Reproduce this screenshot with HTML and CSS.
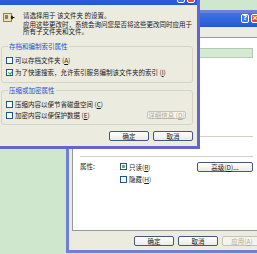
FILE: index.html
```html
<!DOCTYPE html>
<html lang="zh-CN">
  <head>
    <meta charset="UTF-8" />
    <link rel="stylesheet" href="styles.css">
    <title>高级属性</title>
  </head>
  <body>
    <!-- folder properties window, behind -->
    <div class="win back">
      <div class="title">
        <span class="tb help">?</span>
        <span class="tb close">×</span>
      </div>
      <div class="body">
        <div class="tabs"></div>
        <div class="panel">
          <div class="name-row">
            <div class="namebox"></div>
          </div>
          <div class="sep sep1"></div>
          <div class="sep sep2"></div>
          <div class="attr">
            <span class="attr-label">属性:</span>
            <div class="attr-checks">
              <div class="cb"><span class="box mixed"></span>只读(<u>R</u>)</div>
              <div class="cb"><span class="box"></span>隐藏(<u>H</u>)</div>
            </div>
            <button class="btn adv">高级(<u>D</u>)...</button>
          </div>
        </div>
        <div class="actions">
          <button class="btn">确定</button>
          <button class="btn">取消</button>
          <button class="btn" disabled>应用(<u>A</u>)</button>
        </div>
      </div>
    </div>

    <!-- advanced attributes dialog, in front (title bar is mostly off the top) -->
    <div class="win front">
      <div class="title">
        <span class="tb help"></span>
        <span class="tb close"></span>
      </div>
      <div class="body">
        <div class="head">
          <svg class="head-icon" width="12" height="11" viewBox="0 0 12 11">
            <rect x="0.5" y="1.5" width="8" height="8" fill="#f1e3a8" stroke="#8c8060" stroke-width="1" />
            <rect x="2" y="3" width="3" height="4" fill="#6d7fa8" />
            <path d="M8 5.5 L11.5 5.5 M8 5.5 L9.6 4 M8 5.5 L9.6 7" stroke="#111" stroke-width="1.2" fill="none" />
          </svg>
          <div class="head-text">
            <p>请选择用于 该文件夹 的设置。</p>
            <p class="p2">应用这些更改时，系统会询问您是否将这些更改同时应用于所有子文件夹和文件。</p>
          </div>
        </div>

        <fieldset class="group g1">
          <legend>存档和编制索引属性</legend>
          <div class="cb row"><span class="box"></span>可以存档文件夹 (<u>A</u>)</div>
          <div class="cb row"><span class="box checked"></span>为了快速搜索，允许索引服务编制该文件夹的索引 (<u>I</u>)</div>
        </fieldset>

        <fieldset class="group g2">
          <legend>压缩或加密属性</legend>
          <div class="cb row"><span class="box"></span>压缩内容以便节省磁盘空间 (<u>C</u>)</div>
          <div class="cb row">
            <span class="box"></span>加密内容以便保护数据 (<u>E</u>)
            <button class="btn detail" disabled>详细信息 (<u>D</u>)</button>
          </div>
        </fieldset>

        <div class="actions">
          <button class="btn">确定</button>
          <button class="btn">取消</button>
        </div>
      </div>
    </div>
  </body>
</html>
```

FILE: styles.css
```css
* {
  box-sizing: border-box;
}
body {
  margin: 0;
  width: 257px;
  height: 254px;
  overflow: hidden;
  position: relative;
  background: #cfe7cc;
  font-family: "Noto Sans CJK SC", "Noto Sans", sans-serif;
  font-size: 6.5px;
  color: #1a1a1a;
}
u {
  text-decoration: underline;
}
p {
  margin: 0;
}

/* windows */
.win {
  position: absolute;
  display: flex;
  flex-direction: column;
  background: #ecebe0;
  border: 3px solid #6464cc;
}
.win .title {
  display: flex;
  align-items: flex-end;
  gap: 2px;
  background: linear-gradient(#3d74e4, #2558d3);
}
.win .body {
  flex: 1;
  display: flex;
  flex-direction: column;
}
.tb {
  width: 8px;
  height: 9px;
  border: 1px solid #fff;
  border-radius: 2px;
  color: #fff;
  font-family: "DejaVu Sans", sans-serif;
  font-size: 7px;
  font-weight: bold;
  line-height: 7px;
  text-align: center;
}
.tb.help {
  background: #3c78e8;
}
.tb.close {
  background: #d8542e;
}

.front {
  left: -6px;
  top: -22px;
  width: 206px;
  height: 171px;
}
.front .title {
  height: 24px;
  padding: 0 0 2px 180px;
}
.front .body {
  padding: 7px 4px 0 4px;
}

.back {
  left: 66px;
  top: 10px;
  width: 210px;
  height: 243px;
  border-color: #6f7ed6;
}
.back .title {
  height: 14px;
  padding: 0 0 4px 172px;
}

/* front dialog content */
.head {
  display: flex;
  align-items: flex-start;
}
.head-icon {
  margin: 0 8px 0 2px;
  flex: none;
}
.head-text {
  line-height: 7.5px;
  width: 174px;
}
.head-text .p2 {
  margin-top: 1px;
}

.group {
  margin: 0;
  padding: 4px 3px 4px 4px;
  border: 1px solid #d5d3c4;
  border-radius: 3px;
  min-inline-size: 0;
}
.group legend {
  padding: 0 1px;
  margin-left: 2px;
  line-height: 8px;
  color: #1f4fd4;
}
.g1 {
  margin-top: 6.75px;
}
.g1 .row {
  height: 12px;
}
.g2 {
  margin-top: 3px;
  padding-top: 4.5px;
  padding-bottom: 3.5px;
}
.g2 .row {
  height: 11px;
}

.cb {
  display: flex;
  align-items: center;
  white-space: nowrap;
}
.box {
  width: 7px;
  height: 7px;
  margin-right: 2px;
  border: 1px solid #1f5587;
  background: #fff;
  position: relative;
  flex: none;
}
.box.checked::after {
  content: "";
  position: absolute;
  left: 1.5px;
  top: 0;
  width: 1.5px;
  height: 3px;
  border: solid #22a022;
  border-width: 0 1.3px 1.3px 0;
  transform: rotate(40deg);
}
.box.mixed::after {
  content: "";
  position: absolute;
  left: 1px;
  top: 1px;
  width: 3px;
  height: 3px;
  background: #5fb35f;
}

.btn {
  font: inherit;
  height: 10px;
  padding: 0;
  line-height: 8px;
  border: 1px solid #45587c;
  border-radius: 2px;
  background: linear-gradient(#ffffff, #ebeae3);
  color: #1a1a1a;
  text-align: center;
}
.btn:disabled {
  border-color: #c6c4b6;
  color: #b0ac9c;
  background: #f4f3ee;
}
.detail {
  margin-left: auto;
  margin-right: 3px;
  width: 39px;
  height: 8px;
  line-height: 6px;
}

.front .actions {
  display: flex;
  justify-content: flex-end;
  gap: 4px;
  margin-top: 6px;
}
.front .actions .btn {
  width: 40px;
}

/* back dialog content */
.tabs {
  height: 10px;
}
.panel {
  height: 194px;
  margin: 0 11px 0 3px;
  padding: 10px 8px 0 7px;
  border: 1px solid #919b9c;
  background: #fff;
}
.name-row {
  display: flex;
  justify-content: flex-end;
}
.namebox {
  width: 130px;
  height: 10px;
  border: 1px solid #b7c7b5;
  background: #d4ebd2;
}
.sep {
  height: 1px;
  background: #d3d1c4;
}
.sep1 {
  margin-top: 78px;
}
.sep2 {
  margin-top: 19px;
}
.attr {
  display: flex;
  align-items: flex-start;
  margin-top: 4px;
}
.attr-label {
  width: 40px;
  line-height: 11px;
}
.attr-checks {
  display: flex;
  flex-direction: column;
  gap: 1.5px;
}
.attr-checks .cb {
  height: 11px;
}
.adv {
  margin: 1px 0 0 auto;
  width: 56px;
}
.back .actions {
  display: flex;
  gap: 4px;
  margin-top: 5px;
  padding-left: 65px;
}
.back .actions .btn {
  width: 40px;
}
```
